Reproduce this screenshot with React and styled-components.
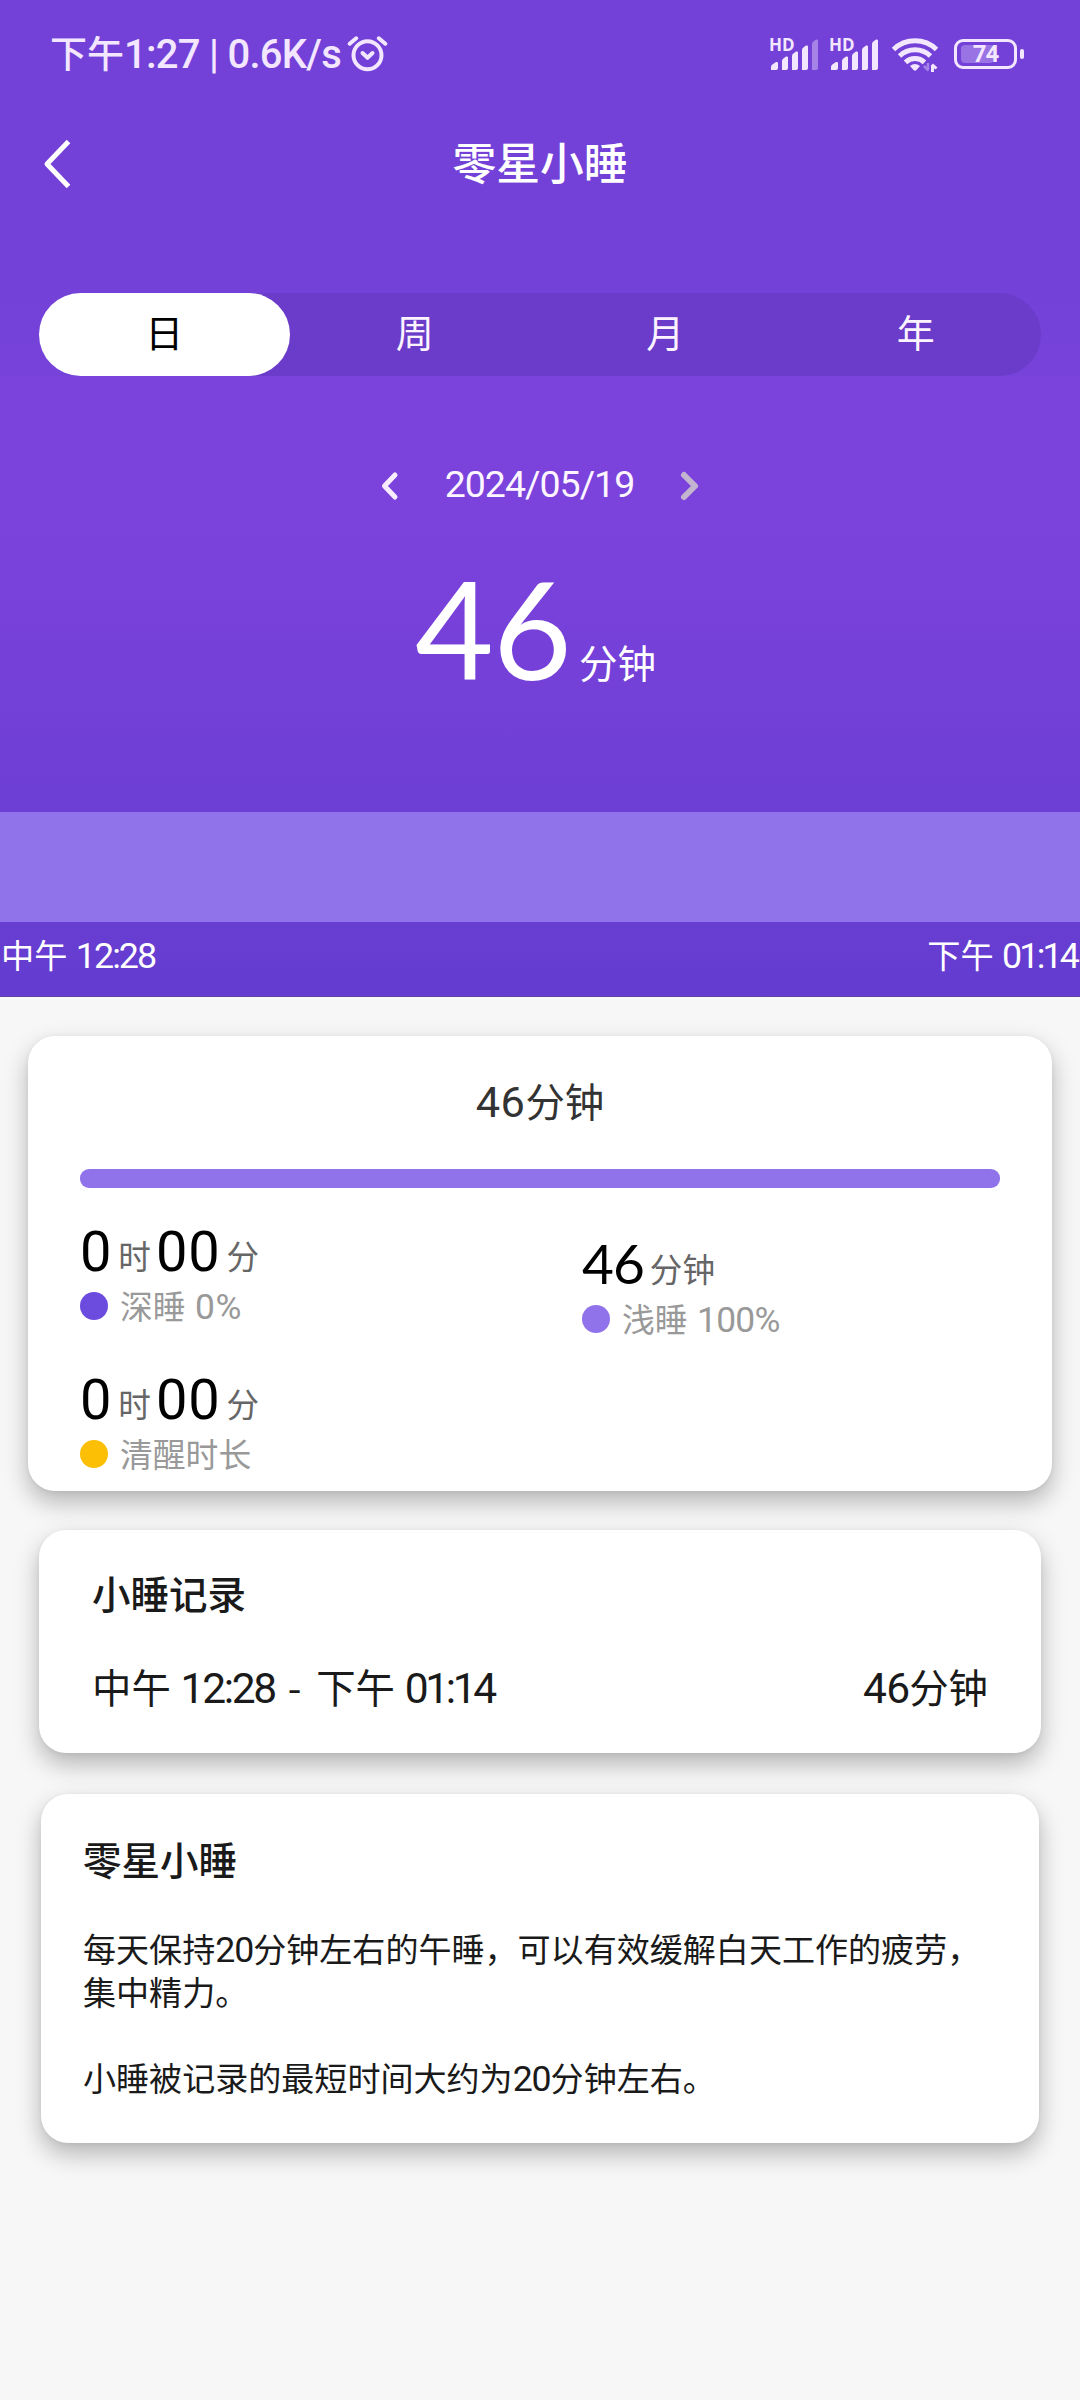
import styled, {createGlobalStyle} from "styled-components";

//==============================================================================
// STYLING
//==============================================================================
const GlobalStyle = createGlobalStyle`
  * {
    box-sizing: border-box;
  }

  body {
    margin: 0;
    background: #f7f7f7;
    font-family: "Noto Sans CJK SC", sans-serif;
    color: #1a1a1a;
  }

  p, h1, h2 {
    margin: 0;
  }
`

const Page = styled.div`
  width: 1080px;
  min-height: 2400px;
  background: #f7f7f7;
  white-space: nowrap;
`

const HeroTop = styled.header`
  height: 376px;
  background: linear-gradient(#7341d8 60%, #7642d9);
  color: white;
`

const StatusBar = styled.div`
  display: flex;
  justify-content: space-between;
  height: 105px;
  padding: 0 56px 0 50px;
  line-height: 105px;
  font-size: 37px;
  font-weight: 500;
  color: #f3e6ff;
`

const StatusGroup = styled.div`
  display: flex;
  align-items: flex-start;
`

/* latin digits run slightly larger than the Chinese text beside them */
const Num = styled.span`
  font-family: Roboto, sans-serif;
  font-size: ${props => props.$size || '1.08em'};
  letter-spacing: ${props => props.$spacing || '-0.03em'};
  line-height: 0;
`

const TitleBar = styled.div`
  display: grid;
  grid-template-columns: 120px 1fr 120px;
  align-items: center;
  height: 112px;

  h1 {
    font-size: 43.8px;
    font-weight: 500;
    line-height: 112px;
    text-align: center;
  }

  svg {
    margin: 5px 0 0 40px;
  }
`

const Tabs = styled.nav`
  display: grid;
  grid-template-columns: repeat(4, 1fr);
  height: 83px;
  margin: 76px 39px 0;
  border-radius: 42px;
  background: #6a3cc9;
`

const Tab = styled.button`
  padding: 0 0 7px;
  border: none;
  border-radius: 42px;
  font: inherit;
  font-size: 38px;
  line-height: 76px;
  background: ${props => props.$active ? 'white' : 'transparent'};
  color: ${props => props.$active ? 'black' : '#fbf3ff'};
`

const Hero = styled.section`
  display: flex;
  flex-direction: column;
  height: 621px;
  padding-top: 80px;
  background: linear-gradient(#7b42dc 0, #7b42dc 25%, #643cd0 100%);
  border-bottom: 1px solid #5f42a8;
  color: white;
`

const DateRow = styled.div`
  display: flex;
  justify-content: center;
  align-items: center;
  gap: 44px;
  height: 56px;
  padding-right: 1px;
  font-family: Roboto, sans-serif;
  font-size: 37.5px;
  letter-spacing: -1px;
  color: #fdf5ff;

  svg {
    margin-top: 4px;
  }
`

const Total = styled.div`
  height: 140px;
  margin-top: 46px;
  padding-right: 9px;
  font-family: Lato, sans-serif;
  font-size: 136px;
  line-height: 140px;
  letter-spacing: -1px;
  text-align: center;

  .unit {
    margin-left: 8px;
    font-family: "Noto Sans CJK SC", sans-serif;
    font-size: 38.5px;
    line-height: 0;
    letter-spacing: 0;
    vertical-align: 2px;
  }
`

const SleepBand = styled.div`
  height: 110px;
  margin-top: auto;
  background: #9073ea;
`

const BandLabels = styled.div`
  display: flex;
  justify-content: space-between;
  height: 74px;
  padding: 0 3px 0 1px;
  font-size: 33.2px;
  line-height: 64px;
  word-spacing: 1px;
`

const Card = styled.section`
  margin: ${props => props.$margin};
  height: ${props => props.$height};
  padding: ${props => props.$padding};
  border-radius: 27px;
  background: white;
  box-shadow: 0 11px 24px rgba(0, 0, 0, 0.27), 0 1px 5px rgba(0, 0, 0, 0.06);

  h2 {
    font-size: 38.5px;
    font-weight: 500;
    line-height: 64px;
  }
`

const Summary = styled.div`
  height: 130px;
  font-size: 39.4px;
  line-height: 128px;
  text-align: center;
  color: #333;
`

const Progress = styled.div`
  height: 19px;
  margin: 3px 0 31px;
  border-radius: 9px;
  background: #9073ea;
`

const StatGrid = styled.div`
  display: grid;
  grid-template-columns: 502px 1fr;
  row-gap: 40px;
`

const Stat = styled.div`
  padding-top: ${props => props.$offset || 0};
  height: 108px;
`

const StatValue = styled.div`
  height: 66px;
  font-family: Roboto, sans-serif;
  font-size: 56px;
  line-height: 66px;
  letter-spacing: 0.8px;
  color: black;

  .minutes {
    font-family: Lato, sans-serif;
    font-size: 55px;
    line-height: 0;
    letter-spacing: -1px;
  }

  .unit {
    margin: 0 5px 0 6px;
    font-family: "Noto Sans CJK SC", sans-serif;
    font-size: 32.6px;
    line-height: 0;
    letter-spacing: 0;
    vertical-align: 2px;
    color: #666;
  }
`

const StatLabel = styled.div`
  display: flex;
  align-items: center;
  gap: 12px;
  height: 42px;
  font-size: 32.8px;
  line-height: 40px;
  word-spacing: 2px;
  color: #999;

  span {
    padding-bottom: 2px;
  }

  &::before {
    content: '';
    width: 28px;
    height: 28px;
    border-radius: 50%;
    background: ${props => props.$color};
  }
`

const RecordRow = styled.div`
  display: flex;
  justify-content: space-between;
  margin-top: 30px;
  font-size: 39.4px;
  line-height: 64px;
  word-spacing: 1px;
`

const Dash = styled.span`
  margin: 0 5px 0 3px;
`

const Tips = styled.div`
  margin-top: 37px;
  font-size: 33.05px;
  line-height: 43.1px;

  p + p {
    margin-top: 43px;
  }
`

const Battery = styled.div`
  position: relative;
  width: 63px;
  height: 30px;
  margin: 39px 7px 0 15px;
  border: 3px solid #f3e6ff;
  border-radius: 9px;
  font-family: Roboto, sans-serif;
  font-size: 24px;
  font-weight: 700;
  line-height: 25px;
  letter-spacing: -1px;
  text-align: center;

  /* charge level and the terminal on the right */
  &::before {
    content: '';
    position: absolute;
    left: 4px;
    top: 3px;
    width: 33px;
    height: 18px;
    border-radius: 4px;
    background: rgba(243, 230, 255, 0.3);
  }

  &::after {
    content: '';
    position: absolute;
    right: -10px;
    top: 7px;
    width: 4px;
    height: 10px;
    border-radius: 2px;
    background: #f3e6ff;
  }

  span {
    position: relative;
  }
`

const SignalBox = styled.div`
  position: relative;
  width: 60px;
  height: 105px;

  svg {
    display: block;
    margin-top: 36px;
  }

  span {
    position: absolute;
    left: 0;
    top: 36px;
    font-family: "Open Sans", sans-serif;
    font-size: 17px;
    font-weight: 700;
    line-height: 17px;
  }
`

const StatusIcon = styled.svg`
  margin: ${props => props.$margin};
  fill: none;
  stroke: currentColor;
`

//==============================================================================
// ICONS
//==============================================================================
const AlarmIcon = () => (
    <StatusIcon width="42" height="40" viewBox="347 34 42 40" strokeWidth="4"
                strokeLinecap="round" strokeLinejoin="round" $margin={'34px 0 0 5px'}>
        <circle cx="368.5" cy="55.2" r="14"/>
        <path d="M363.5 53l5 4.800 5-4.800"/>
        <path d="M350.700 43.800l6.500-5.500M386.300 43.800l-6.500-5.500"/>
    </StatusIcon>
)

const Signal = ({weak}) => (
    <SignalBox>
        <span>HD</span>
        <svg width="56" height="36" viewBox="0 0 56 36" fill="currentColor">
            <path d="M2 34v-3q0-2 2-3l3-2q2-.5 2 1v5q0 2-2 2z"/>
            <path d="M13 34v-9q0-2 2-3l2-1.500q2-.5 2 1V32q0 2-2 2z"/>
            <path d="M23 34V20q0-2 2-3l2-1.500q2-.5 2 1V32q0 2-2 2z"/>
            <path d="M33 34V14q0-2 2-3l2-1.500q2-.5 2 1V32q0 2-2 2z"/>
            <path d="M43 34V8q0-2 2-3l2-1.500q2-.5 2 1V32q0 2-2 2z" opacity={weak ? 0.4 : 1}/>
        </svg>
    </SignalBox>
)

const WifiIcon = () => (
    <StatusIcon width="48" height="38" viewBox="892 35 48 38" strokeWidth="5"
                $margin={'35px 0 0 2px'}>
        <path d="M894.500 49.500a31 31 0 0 1 43 0"/>
        <path d="M900.500 56a22.500 22.500 0 0 1 31 0"/>
        <path d="M906.500 62.300a14 14 0 0 1 19 0"/>
        <path d="M911 66q5-4 10 0l-3.500 4q-1.500 1.500-3 0z" fill="currentColor" stroke="none"/>
        <path d="M929 63v6.500M929.500 70.500l-4.500-4.500" strokeWidth="2.500" opacity="0.4"/>
        <path d="M933.500 72v-7M933 64.500l4.500 4" strokeWidth="3"/>
    </StatusIcon>
)

const BackIcon = () => (
    <svg width="36" height="52" viewBox="0 0 36 52" fill="none" stroke="currentColor"
         strokeWidth="5" strokeLinejoin="round">
        <path d="M28.500 3.500L7 26l21.500 22.500"/>
    </svg>
)

const Chevron = ({d, color, width}) => (
    <svg width="22" height="34" viewBox="0 0 22 34" fill="none" stroke={color}
         strokeWidth={width} strokeLinecap="round" strokeLinejoin="round">
        <path d={d}/>
    </svg>
)

//==============================================================================
// NAP PAGE
//==============================================================================
const tabs = ['日', '周', '月', '年']

const App = () => {
    return (
        <Page>
            <GlobalStyle/>
            <HeroTop>
                <StatusBar>
                    <StatusGroup>
                        <div>下午<Num $spacing={'-0.018em'}>1:27 | 0.6K/s</Num></div>
                        <AlarmIcon/>
                    </StatusGroup>
                    <StatusGroup>
                        <Signal weak/>
                        <Signal/>
                        <WifiIcon/>
                        <Battery><span>74</span></Battery>
                    </StatusGroup>
                </StatusBar>
                <TitleBar>
                    <BackIcon/>
                    <h1>零星小睡</h1>
                </TitleBar>
                <Tabs>
                    {tabs.map((tab, i) => (
                        <Tab key={tab} $active={i === 0}>{tab}</Tab>
                    ))}
                </Tabs>
            </HeroTop>

            <Hero>
                <DateRow>
                    <Chevron d="M16 6L5.500 17 16 28" color="#f8edff" width="5"/>
                    <span>2024/05/19</span>
                    <Chevron d="M6 6l11 11L6 28" color="#c3b5cf" width="6"/>
                </DateRow>
                <Total>
                    46<span className={'unit'}>分钟</span>
                </Total>
                <SleepBand/>
                <BandLabels>
                    <span>中午 <Num $spacing={'-0.055em'}>12:28</Num></span>
                    <span>下午 <Num $spacing={'-0.08em'}>01:14</Num></span>
                </BandLabels>
            </Hero>

            <Card $margin={'39px 28px 0'} $height={'455px'} $padding={'0 52px'}>
                <Summary><Num $size={'1.1em'} $spacing={'0.01em'}>46</Num>分钟</Summary>
                <Progress/>
                <StatGrid>
                    <Stat>
                        <StatValue>
                            0<span className={'unit'}>时</span>00<span className={'unit'}>分</span>
                        </StatValue>
                        <StatLabel $color={'#6c4cdf'}>
                            <span>深睡 <Num $spacing={'0.02em'}>0%</Num></span>
                        </StatLabel>
                    </Stat>
                    <Stat $offset={'13px'}>
                        <StatValue>
                            <span className={'minutes'}>46</span>
                            <span className={'unit'}>分钟</span>
                        </StatValue>
                        <StatLabel $color={'#9073ea'}>
                            <span>浅睡 <Num $spacing={'-0.02em'}>100%</Num></span>
                        </StatLabel>
                    </Stat>
                    <Stat>
                        <StatValue>
                            0<span className={'unit'}>时</span>00<span className={'unit'}>分</span>
                        </StatValue>
                        <StatLabel $color={'#fcbf05'}>
                            <span>清醒时长</span>
                        </StatLabel>
                    </Stat>
                </StatGrid>
            </Card>

            <Card $margin={'39px 39px 0'} $height={'223px'} $padding={'30px 53px 0'}>
                <h2>小睡记录</h2>
                <RecordRow>
                    <span>
                        中午 <Num $spacing={'-0.055em'}>12:28</Num> <Dash>-</Dash> 下午 <Num $spacing={'-0.08em'}>01:14</Num>
                    </span>
                    <span><Num $spacing={'-0.02em'}>46</Num>分钟</span>
                </RecordRow>
            </Card>

            <Card $margin={'41px 41px 0'} $height={'349px'} $padding={'32px 42px 0'}>
                <h2>零星小睡</h2>
                <Tips>
                    <p>
                        每天保持<Num>20</Num>分钟左右的午睡，可以有效缓解白天工作的疲劳，<br/>
                        集中精力。
                    </p>
                    <p>小睡被记录的最短时间大约为<Num>20</Num>分钟左右。</p>
                </Tips>
            </Card>
        </Page>
    )
}

export default App;
